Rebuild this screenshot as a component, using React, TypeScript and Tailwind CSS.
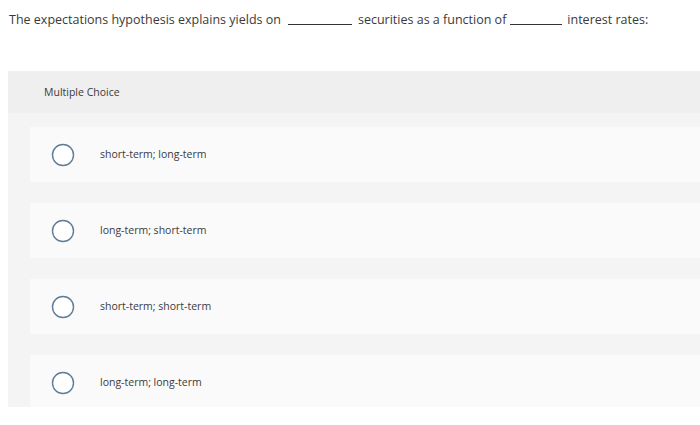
import React from 'react';

const OPTIONS = [
  'short-term; long-term',
  'long-term; short-term',
  'short-term; short-term',
  'long-term; long-term',
];

const Radio = () => (
  <svg width="24" height="24" viewBox="0 0 24 24" className="shrink-0">
    <circle cx="12" cy="12" r="10.5" fill="#ffffff" stroke="#5f7c98" strokeWidth="1.4" />
  </svg>
);

export default function App() {
  return (
    <div className="w-[700px] h-[425px] bg-white overflow-hidden text-[#3a3a3a]" style={{ fontFamily: '"Open Sans", Lato, sans-serif' }}>
      {/* Question */}
      <div className="pl-[9px] pt-[11px] text-[12.5px] leading-[18px] flex items-end whitespace-nowrap">
        <span>The expectations hypothesis explains yields on</span>
        <span className="inline-block w-[64px] ml-[7px] mr-[6px] border-b border-[#333333] mb-[4px]" />
        <span>securities as a function of</span>
        <span className="inline-block w-[52px] ml-[4px] mr-[5px] border-b border-[#333333] mb-[4px]" />
        <span>interest rates:</span>
      </div>

      {/* Answer panel */}
      <div className="ml-[8px] mt-[42px] h-[336px] bg-[#f4f4f4] overflow-hidden">
        <div className="h-[42px] bg-[#efefef] pl-[36px] pt-[1px] flex items-center text-[10.5px]">
          Multiple Choice
        </div>
        <div className="pl-[22px] pt-[14px] flex flex-col gap-[21px]">
          {OPTIONS.map((o) => (
            <div key={o} className="h-[55px] bg-[#fafafa] flex items-center pl-[21px] gap-[25px] text-[10.5px] shrink-0">
              <Radio />
              <span className="pt-[1px]">{o}</span>
            </div>
          ))}
        </div>
      </div>
    </div>
  );
}
